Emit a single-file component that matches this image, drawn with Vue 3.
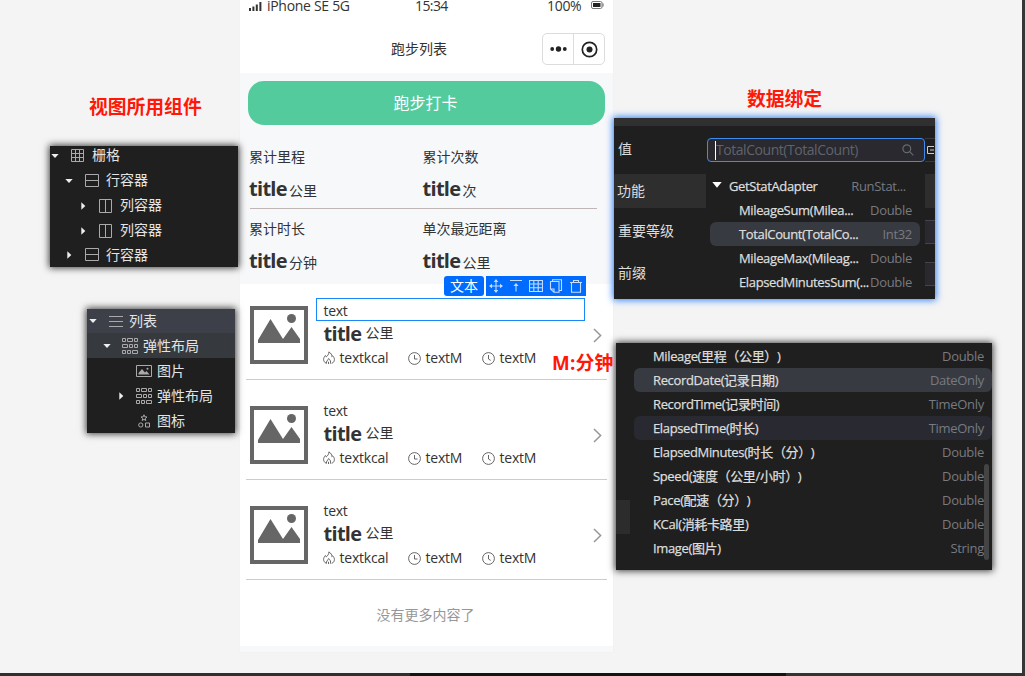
<script setup>
const statRows = [
  [{ label: '累计里程', unit: '公里' }, { label: '累计次数', unit: '次' }],
  [{ label: '累计时长', unit: '分钟' }, { label: '单次最远距离', unit: '公里' }],
]
const viewTree = [
  { level: 0, open: true, icon: 'grid', name: '栅格' },
  { level: 1, open: true, icon: 'row', name: '行容器' },
  { level: 2, open: false, icon: 'col', name: '列容器' },
  { level: 2, open: false, icon: 'col', name: '列容器' },
  { level: 1, open: false, icon: 'row', name: '行容器' },
]
const listTree = [
  { level: 0, open: true, icon: 'list', name: '列表', tone: 'hot' },
  { level: 1, open: true, icon: 'flex', name: '弹性布局', tone: 'warm' },
  { level: 2, leaf: true, icon: 'image', name: '图片' },
  { level: 2, open: false, icon: 'flex', name: '弹性布局' },
  { level: 2, leaf: true, icon: 'shapes', name: '图标' },
]
const statFields = [
  { name: 'MileageSum(Milea...', type: 'Double' },
  { name: 'TotalCount(TotalCo...', type: 'Int32', active: true },
  { name: 'MileageMax(Mileag...', type: 'Double' },
  { name: 'ElapsedMinutesSum(...', type: 'Double' },
]
const recordFields = [
  { name: 'Mileage(里程（公里）)', type: 'Double' },
  { name: 'RecordDate(记录日期)', type: 'DateOnly', tone: 'active' },
  { name: 'RecordTime(记录时间)', type: 'TimeOnly' },
  { name: 'ElapsedTime(时长)', type: 'TimeOnly', tone: 'hover' },
  { name: 'ElapsedMinutes(时长（分）)', type: 'Double' },
  { name: 'Speed(速度（公里/小时）)', type: 'Double' },
  { name: 'Pace(配速（分）)', type: 'Double' },
  { name: 'KCal(消耗卡路里)', type: 'Double' },
  { name: 'Image(图片)', type: 'String' },
]
const trees = [
  { id: 'view', nodes: viewTree },
  { id: 'list', nodes: listTree },
]
</script>

<template>
  <div class="screen">
    <main class="canvas">
      <section class="phone">
        <header class="top">
          <div class="status">
            <svg class="signal" width="13" height="10" viewBox="0 0 13 10"><path d="M0 7h2v3H0zM3.4 5.5h2V10h-2zM6.8 3.5h2V10h-2zM10.4 1h2v9h-2z" fill="#333" /></svg>
            <span class="carrier">iPhone SE 5G</span>
            <span class="time">15:34</span>
            <span class="percent">100%</span>
            <svg class="battery" width="13" height="8" viewBox="0 0 13 8"><rect x=".5" y=".5" width="10.5" height="7" rx="1.5" fill="#fff" stroke="#777" /><rect x="2" y="2" width="7.5" height="4" fill="#222" /><path d="M12 2.4v3" stroke="#777" stroke-width="1.2" /></svg>
          </div>
          <div class="nav">
            <span class="nav-title">跑步列表</span>
            <div class="capsule">
              <span class="cap-half"><svg width="17" height="6" viewBox="0 0 17 6"><circle cx="2.2" cy="3" r="1.9" /><circle cx="8.5" cy="3" r="2.7" /><circle cx="14.8" cy="3" r="1.9" /></svg></span>
              <span class="cap-half"><svg width="17" height="17" viewBox="0 0 17 17"><circle cx="8.5" cy="8.5" r="7.2" fill="none" stroke="#222" stroke-width="1.7" /><circle cx="8.5" cy="8.5" r="3" /></svg></span>
            </div>
          </div>
        </header>
        <button class="punch">跑步打卡</button>
        <div class="stats">
          <div v-for="(row, i) in statRows" :key="i" class="stat-row">
            <div v-for="s in row" :key="s.label" class="stat">
              <div class="stat-label">{{ s.label }}</div>
              <div class="stat-value"><b class="big">title</b><span>{{ s.unit }}</span></div>
            </div>
          </div>
        </div>
        <div class="runs">
          <article v-for="n in 3" :key="n" class="run">
            <svg class="thumb" width="58" height="58" viewBox="0 0 58 58"><rect x="2" y="2" width="54" height="54" fill="#fff" stroke="#666" stroke-width="4" /><path d="M8 34 20.5 13 33 33l8.500-12L50 33v4H8z" fill="#666" /><circle cx="41.500" cy="12.500" r="4.500" fill="#666" /></svg>
            <div class="run-body">
              <div class="run-text">text</div>
              <div class="run-title"><b class="big">title</b><span>公里</span></div>
              <div class="metrics">
                <span class="metric kcal"><svg width="12" height="14" viewBox="0 0 12 14"><path d="M3.400 12.400C1.500 11.600.6 10 .6 8.400c0-1.600.8-2.700 1.800-3.900l.9 1.400C4.800 4.600 6 3 5.900.9c2.200 1.200 3.100 3.200 2.900 4.700l.9-.8c1.200 1.400 1.700 2.400 1.700 3.700 0 1.800-1 3.200-2.700 3.900M3.400 12.400c-.3-2.200 1.500-3 2.200-4.900 1.500 1.300 2.600 2.800 1.800 5.200M5.500 13v-2.200" /></svg>textkcal</span>
                <span class="metric mins"><svg width="13" height="13" viewBox="0 0 13 13"><circle cx="6.500" cy="6.500" r="5.900" /><path d="M6.500 3v4H9.500" /></svg>textM</span>
                <span class="metric"><svg width="13" height="13" viewBox="0 0 13 13"><circle cx="6.500" cy="6.500" r="5.900" /><path d="M6.500 3v4l2.200 1.400" /></svg>textM</span>
              </div>
            </div>
            <svg class="chevron" width="9" height="15" viewBox="0 0 9 15"><path d="M1 1l6.600 6.500L1 14" /></svg>
          </article>
        </div>
        <footer class="end">没有更多内容了</footer>
        <div class="selection"></div>
        <div class="toolbar">
          <span class="tag">文本</span>
          <div class="tools">
            <svg viewBox="0 0 14 14"><path d="M7 2v10M2 7h10" /><path class="solid" d="M7 0l2.300 3H4.700zM7 14l2.300-3H4.700zM0 7l3-2.300v4.600zM14 7l-3-2.300v4.600z" /></svg>
            <svg viewBox="0 0 14 14"><path d="M1 1.500h12M7 5v7.500" /><path class="solid" d="M7 4l2.500 3h-5z" /></svg>
            <svg viewBox="0 0 14 14"><path d="M.5 1.500h13v11H.5zM.5 5h13M.5 8.800h13M4.800 1.500v11M9.200 1.500v11" /></svg>
            <svg viewBox="0 0 14 14"><path d="M3.500 2.500V.7h9v10.800h-2M1.500 2.500h8.500v10.800H5L1.500 10zM1.500 10H5v3.300" /></svg>
            <svg viewBox="0 0 14 14"><path d="M1 3.500h12M4.500 3.500v-2h5v2M2.500 3.500v9.800h9V3.500" /></svg>
          </div>
        </div>
      </section>

      <h2 class="note note-view">视图所用组件</h2>
      <h2 class="note note-data">数据绑定</h2>

      <aside v-for="t in trees" :key="t.id" class="tree" :class="'tree-' + t.id">
        <div v-for="(n, i) in t.nodes" :key="i" class="node" :class="[n.tone, 'lv' + n.level]">
          <svg class="caret" :class="{ hidden: n.leaf }" width="8" height="8" viewBox="0 0 8 8"><path :d="n.open ? 'M.3 2h7.400L4 6z' : 'M2.300 .3v7.400L6.300 4z'" /></svg>
          <svg v-if="n.icon === 'grid'" class="ico" width="16" height="14" viewBox="0 0 16 14"><path d="M1.500.5h12v12h-12zM1.500 4.500h12M1.500 8.500h12M5.500.5v12M9.500.5v12" /></svg>
          <svg v-else-if="n.icon === 'row'" class="ico" width="16" height="14" viewBox="0 0 16 14"><path d="M1.500.5h13v12h-13zM1.500 6.500h13" /></svg>
          <svg v-else-if="n.icon === 'col'" class="ico" width="16" height="14" viewBox="0 0 16 14"><path d="M1.500.5h12v13h-12zM7.500.5v13" /></svg>
          <svg v-else-if="n.icon === 'list'" class="ico" width="16" height="14" viewBox="0 0 16 14"><path d="M1 2.500h14M1 7.500h14M1 12.500h14" /></svg>
          <svg v-else-if="n.icon === 'flex'" class="ico" width="16" height="16" viewBox="0 0 16 16"><path d="M.5.5h3v3h-3zM5.500.5h5v3h-5zM12.500.5h3v3h-3zM.5 6.500h5v3h-5zM7.500 6.500h3v3h-3zM12.500 6.500h3v3h-3zM.5 12.500h3v3h-3zM5.500 12.500h3v3h-3zM10.500 12.500h5v3h-5z" /></svg>
          <svg v-else-if="n.icon === 'image'" class="ico" width="16" height="14" viewBox="0 0 16 14"><path d="M.5 1.500h15v11H.5z" /><path class="fill" d="M2.500 10.500V9L6 5l3 3.500 1.500-1.500 3 3.500z" /><circle class="fill" cx="11.500" cy="4.800" r="1" /></svg>
          <svg v-else class="ico" width="16" height="14" viewBox="0 0 16 14"><path d="M8 .8l.8 2 2.200.2-1.700 1.400.5 2.100L8 5.400 6.200 6.500l.5-2.100L5 3l2.200-.2z" /><circle cx="4.800" cy="11" r="2.100" /><path d="M9.500 9h4v4h-4z" /></svg>
          <span>{{ n.name }}</span>
        </div>
      </aside>

      <aside class="binding">
        <div class="binding-top"></div>
        <div class="binding-main">
          <div class="props">
            <span class="prop">值</span>
            <span class="prop group">功能</span>
            <span class="prop level">重要等级</span>
            <span class="prop">前缀</span>
          </div>
          <div class="picker">
            <div class="search">
              <i class="cursor"></i><span>TotalCount(TotalCount)</span>
              <svg width="12" height="12" viewBox="0 0 12 12"><circle cx="4.800" cy="4.800" r="3.900" /><path d="M7.700 7.700l3.600 3.600" /></svg>
            </div>
            <div class="adapter">
              <svg width="10" height="8" viewBox="0 0 10 8"><path d="M.3 0h9.400L5 5.800z" fill="#fff" /></svg>
              <span class="fname adapter-name">GetStatAdapter</span><span class="ftype">RunStat...</span>
            </div>
            <div v-for="f in statFields" :key="f.name" class="field" :class="{ active: f.active }">
              <span class="fname">{{ f.name }}</span><span class="ftype">{{ f.type }}</span>
            </div>
          </div>
          <div class="edge">
            <svg width="10" height="24" viewBox="0 0 10 24"><path d="M0 .5h10M0 23.500h10" stroke="#3a3a42" /><path d="M9 8.500H2.500v7H9M5 12h4" stroke="#ccc" stroke-width="1" fill="none" /></svg>
            <i class="edge-band"></i><i class="edge-box"></i><i class="edge-box"></i>
          </div>
        </div>
      </aside>

      <aside class="records">
        <div class="gutter"><i></i></div>
        <div class="record-list">
          <div v-for="f in recordFields" :key="f.name" class="record" :class="f.tone">
            <span class="fname">{{ f.name }}</span><span class="ftype">{{ f.type }}</span>
          </div>
        </div>
        <i class="scroll"></i>
      </aside>
      <h2 class="note note-min">M:分钟</h2>
    </main>
  </div>
</template>

<style>
body { margin: 0; overflow: hidden; }
</style>

<style scoped>
* { box-sizing: border-box; }
.screen { width: 1025px; height: 676px; padding: 0 3px 3px 0; background: linear-gradient(90deg, #302e2e 0 410px, #151314 410px 786px, #353333 786px); font-family: "Open Sans", "Noto Sans CJK SC", sans-serif; font-size: 14px; color: #333; text-spacing-trim: space-all; overflow: hidden; }
.canvas { position: relative; width: 1022px; height: 673px; background: #f4f4f4; overflow: hidden; box-shadow: 3px 0 0 #363636; white-space: nowrap; }

.phone { position: absolute; left: 240px; top: 0; width: 373px; height: 652px; background: #f7f8fa; box-shadow: 0 0 1px #e4e5ee; }
.top { height: 73px; background: #fff; }
.status { display: grid; grid-template-columns: 18px 148px 132px 45px auto; height: 17px; padding-left: 9px; line-height: 12px; align-items: start; }
.signal { margin-top: 1px; }
.battery { margin-top: 1px; margin-left: -1px; }
.carrier { letter-spacing: -0.3px; }
.percent { letter-spacing: -0.3px; }
.time { letter-spacing: -0.6px; }
.nav { display: flex; justify-content: space-between; align-items: center; height: 64px; padding: 0 8px 0 151px; }
.nav-title { line-height: 20px; }
.capsule { display: flex; width: 63px; height: 32px; border: 1px solid #dcdcdc; border-radius: 5px; }
.cap-half { flex: 1; display: flex; align-items: center; justify-content: center; fill: #222; }
.cap-half + .cap-half { border-left: 1px solid #dcdcdc; }
.punch { display: block; width: 357px; height: 44px; margin: 8px 8px 0; padding: 0 2px 0 0; border: 0; border-radius: 16px; background: #54cb9d; color: #fff; font: 16px/44px "Open Sans", "Noto Sans CJK SC", sans-serif; }
.stats { height: 159px; padding: 12px 16px 0 10px; }
.stat-row { display: grid; grid-template-columns: 173.500px 1fr; height: 72px; }
.stat-row:first-child { border-bottom: 1px solid #c0b6b6; }
.stat { margin-left: -1px; }
.stat-label { height: 40px; line-height: 40px; }
.stat-value { display: flex; align-items: baseline; line-height: 24px; }
.stat-value .big { margin-right: 2px; }
.big { font-size: 20px; letter-spacing: -0.7px; }
.runs { height: 296px; background: #fff; padding: 0 6px; }
.run { display: flex; align-items: flex-start; height: 100px; padding: 26px 5px 0 4px; border-bottom: 1px solid #ccc; }
.run:first-child { height: 96px; padding-top: 22px; }
.run-body { width: 269px; margin-left: 15.500px; padding-top: 0; }
.run-text { height: 12px; line-height: 9px; letter-spacing: -0.3px; }
.run-title { display: flex; align-items: center; height: 28px; line-height: 28px; padding-top: 4px; }
.run-title .big { margin-right: 4px; }
.run-title span { margin-top: -2px; }
.metrics { display: flex; height: 24px; align-items: center; margin-left: -1px; }
.metric { display: flex; align-items: center; gap: 5px; letter-spacing: -0.2px; line-height: 20px; }
.metric svg { fill: none; stroke: #555; stroke-width: .9; }
.kcal { width: 85px; }
.mins { width: 74px; }
.chevron { margin: 22px 0 0 auto; fill: none; stroke: #969799; stroke-width: 1.500; }
.end { height: 66px; padding-right: 2px; background: #fff; text-align: center; color: #969799; line-height: 70px; }
.selection { position: absolute; left: 76px; top: 298px; width: 269px; height: 23px; border: 1px solid #1989fa; }
.toolbar { position: absolute; left: 204px; top: 276px; display: flex; gap: 2px; height: 20px; color: #fff; line-height: 20px; }
.tag { width: 40px; border-radius: 3px; background: #006cff; text-align: center; }
.tools { display: flex; width: 100px; align-items: center; justify-content: space-around; background: #006cff; }
.tools svg { width: 14px; height: 14px; fill: none; stroke: #c4dcff; stroke-width: 1.100; }
.tools .solid { fill: #c4dcff; stroke: none; }

.note { position: absolute; margin: 0; color: #ff1808; font-size: 18.800px; line-height: 24px; font-weight: 700; }
.note-view { left: 89px; top: 95px; }
.note-data { left: 747px; top: 87px; }
.note-min { left: 552px; top: 351px; letter-spacing: 0.2px; }

.tree { position: absolute; display: flex; flex-direction: column; justify-content: center; background: #1f1f1f; color: #e4e4e4; overflow: visible; box-shadow: 0 0 7px 1px rgba(0, 0, 0, .75); }
.tree-view { left: 50px; top: 146px; width: 188px; height: 121px; }
.tree-list { left: 87px; top: 309px; width: 148px; height: 124px; }
.node { display: flex; flex: none; align-items: center; height: 25px; line-height: 25px; }
.node span { margin: -2px 0 0 -1px; }
.tree-list .node span { margin: -1px 0 0; }
.tree-view .node:first-child { height: 22px; padding-bottom: 3px; }
.tree-view .node:last-child { height: 24px; }
.tree-list .node:first-child { height: 24px; }
.caret { fill: #eee; margin-left: 1px; }
.hidden { visibility: hidden; }
.ico { margin: 0 7px 0 11px; fill: none; stroke: #aaa; }
.ico .fill { fill: #aaa; stroke: none; }
.tree-list .caret { margin-left: 2px; }
.lv1 { padding-left: 14px; }
.lv2 { padding-left: 28px; }
.tree-list .ico { margin-right: 5px; }
.hot { background: #3d4048; }
.warm { background: #36393e; }

.binding { position: absolute; left: 614px; top: 118px; width: 321px; height: 181px; background: #1f1f1f; color: #ddd; box-shadow: 0 0 7px 1px #287df8; }
.binding-top { height: 8px; background: #303030; }
.binding-main { display: flex; height: 173px; overflow: hidden; }
.props { display: flex; flex-direction: column; width: 92px; }
.prop { height: 42px; padding-left: 4px; line-height: 42px; }
.prop:first-child { height: 48px; line-height: 46px; }
.prop.group { height: 34px; padding-left: 3px; background: #2e2e2e; line-height: 34px; }
.prop.level { height: 44px; line-height: 46px; }
.picker { width: 219px; padding: 12px 1px 0; }
.search { display: flex; align-items: center; width: 218px; height: 24px; padding: 0 10px 0 7px; border: 1px solid #3c8cf0; border-radius: 4px; background: #29292f; color: #60636a; letter-spacing: -0.45px; line-height: 22px; }
.cursor { width: 1px; height: 19px; background: #fff; }
.search svg { margin-left: auto; fill: none; stroke: #666970; stroke-width: 1.200; }
.adapter { display: flex; align-items: center; height: 24px; margin-top: 12px; padding: 0 18px 0 5px; line-height: 24px; }
.fname { font-size: 13px; color: #ddd; letter-spacing: -0.36px; -webkit-text-stroke: .25px #ddd; }
.ftype { margin-left: auto; font-size: 13px; color: #777a80; letter-spacing: -0.3px; }
.adapter-name { margin-left: 7px; }
.field { display: flex; align-items: center; height: 24px; width: 210px; margin-left: 3px; padding: 0 8px 0 29px; border-radius: 6px; line-height: 24px; }
.field.active, .record.active { background: #373a40; }
.edge { display: flex; flex-direction: column; width: 10px; padding-top: 12px; }
.edge svg { flex: none; }
.edge-band { flex: none; height: 34px; margin: 12px 0; background: #2e2e2e; }
.edge-box { flex: none; height: 24px; margin-bottom: 18px; background: #29292f; border: solid #44444a; border-width: 1px 0; }

.records { position: absolute; left: 616px; top: 343px; width: 376px; height: 227px; display: flex; background: #1f1f1f; box-shadow: 0 0 7px 1px rgba(0, 0, 0, .75); }
.gutter { width: 14px; padding-top: 157px; }
.gutter i { display: block; height: 34px; background: #2c2c2c; }
.record-list { flex: 1; padding: 1px 0 0 4px; }
.record { display: flex; align-items: center; height: 24px; padding: 0 8px 0 19px; border-radius: 6px; line-height: 24px; }
.record.hover { background: #292a31; }
.scroll { position: absolute; right: 3px; top: 121px; width: 5px; height: 96px; border-radius: 3px; background: #444; }
</style>
